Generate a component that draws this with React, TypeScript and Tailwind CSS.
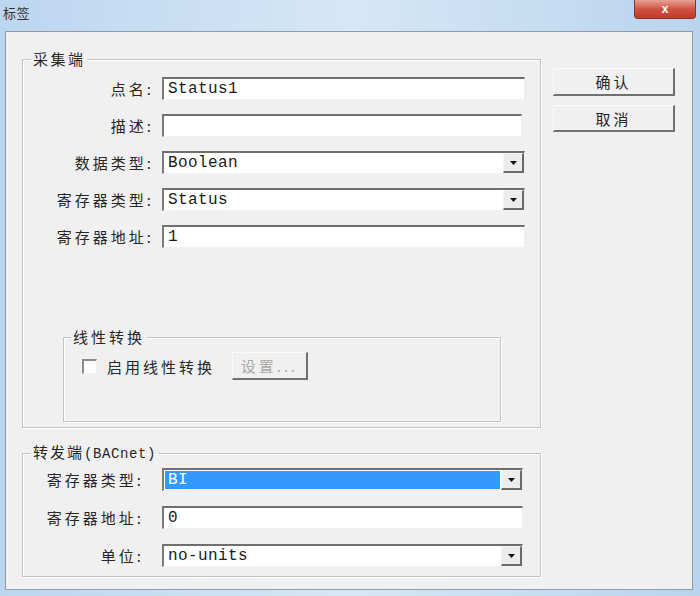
const cjk = "font-['Noto_Sans_CJK_SC','Noto_Sans',sans-serif]";
const mono = "font-['Liberation_Mono','DejaVu_Sans_Mono',monospace]";

function Arrow() {
  return (
    <div className="flex h-full w-[21px] shrink-0 items-center justify-center border-l border-t border-b-2 border-r-2 border-l-[#f4f4f4] border-t-[#f4f4f4] border-b-[#6a6a6a] border-r-[#6a6a6a] bg-[#ececec]">
      <svg width="7" height="4" viewBox="0 0 7 4">
        <path d="M0 0h7L3.5 4z" fill="#111" />
      </svg>
    </div>
  );
}

function Row({
  label,
  value = "",
  width,
  combo = false,
  hot = false,
  inset = false,
}: {
  label: string;
  value?: string;
  width: string;
  combo?: boolean;
  hot?: boolean;
  inset?: boolean;
}) {
  return (
    <div className="flex h-[23px] items-center">
      <div
        className={`w-[131px] text-right text-[15px] leading-none tracking-[3px] text-[#262626] ${cjk} ${
          inset ? "pr-[10px]" : ""
        }`}
      >
        {label}
      </div>
      <div
        className={`ml-[8px] flex h-full ${width} border-l-2 border-t-2 border-b border-r border-l-[#7a7a7a] border-t-[#6f6f6f] border-b-[#f2f2f2] border-r-[#ededed] bg-white`}
      >
        <div className="flex flex-1 items-center p-[1px]">
          <div
            className={`flex h-full flex-1 items-center pl-[3px] text-[16px] tracking-[0.4px] ${mono} ${
              hot ? "bg-[#3399ff] text-white" : "text-[#1a1a1a]"
            }`}
          >
            {value}
          </div>
        </div>
        {combo && <Arrow />}
      </div>
    </div>
  );
}

function Btn({ children, disabled = false, size }: { children: string; disabled?: boolean; size: string }) {
  return (
    <div
      className={`flex items-center justify-center ${size} border-l border-t border-b-2 border-r-2 border-l-[#fafafa] border-t-[#fafafa] border-b-[#707070] border-r-[#707070] bg-[#f0f0f0] text-[15px] leading-none tracking-[3px] ${cjk} ${
        disabled ? "text-[#a9a9a9]" : "text-[#262626]"
      }`}
    >
      {children}
    </div>
  );
}

export default function App() {
  return (
    <div className="flex h-[596px] w-[700px] flex-col bg-gradient-to-r from-[#bcd6ef] via-[#d6e7f7] to-[#b9d4ed]">
      {/* title bar */}
      <div className="flex h-[31px] shrink-0 items-start justify-between">
        <div className={`ml-[3px] mt-[6px] text-[13px] leading-none tracking-[0.5px] text-[#333] ${cjk}`}>标签</div>
        <div className="mr-[4px] flex h-[19px] w-[62px] items-center justify-center rounded-b-[4px] border border-t-0 border-[#8a3428] bg-gradient-to-b from-[#e7a295] via-[#cf5242] to-[#c23a29]">
          <span className="text-[12px] font-bold leading-none text-white [font-family:'Liberation_Sans',sans-serif]">x</span>
        </div>
      </div>

      {/* client area */}
      <div className="mb-[6px] ml-[5px] mr-[7px] flex flex-1 border border-[#8e9bab] bg-[#f0f0f0] pl-[16px] pt-[18px]">
        <div className="flex w-[519px] flex-col">
          <fieldset className="border border-[#c4c4c4] shadow-[inset_1px_1px_0_#fff,1px_1px_0_#fff]">
            <legend className={`ml-[8px] px-[2px] text-[15px] leading-[18px] tracking-[2.5px] text-[#262626] ${cjk}`}>
              采集端
            </legend>
            <div className="mt-[9px] flex flex-col gap-[14px]">
              <Row label="点名:" value="Status1" width="w-[363px]" />
              <Row label="描述:" width="w-[360px]" />
              <Row label="数据类型:" value="Boolean" width="w-[363px]" combo />
              <Row label="寄存器类型:" value="Status" width="w-[363px]" combo />
              <Row label="寄存器地址:" value="1" width="w-[363px]" />
            </div>

            <fieldset className="mb-[5px] ml-[40px] mt-[80px] w-[438px] border border-[#c4c4c4] shadow-[inset_1px_1px_0_#fff,1px_1px_0_#fff]">
              <legend className={`ml-[7px] px-[2px] text-[15px] leading-[18px] tracking-[3px] text-[#262626] ${cjk}`}>
                线性转换
              </legend>
              <div className="mb-[41px] ml-[18px] mt-[6px] flex h-[28px] items-center">
                <div className="h-[15px] w-[15px] border-l-2 border-t-2 border-b border-r border-l-[#8c8c8c] border-t-[#8c8c8c] border-b-[#f4f4f4] border-r-[#f4f4f4] bg-white" />
                <span className={`ml-[10px] text-[15px] leading-none tracking-[3px] text-[#262626] ${cjk}`}>启用线性转换</span>
                <div className="ml-[17px]">
                  <Btn disabled size="h-[28px] w-[76px]">
                    设置...
                  </Btn>
                </div>
              </div>
            </fieldset>
          </fieldset>

          <fieldset className="mt-[15px] border border-[#c4c4c4] shadow-[inset_1px_1px_0_#fff,1px_1px_0_#fff]">
            <legend className={`ml-[8px] px-[2px] text-[15px] leading-[18px] tracking-[2px] text-[#262626] ${cjk}`}>
              转发端<span className={`text-[14px] tracking-[0.6px] ${mono}`}>(BACnet)</span>
            </legend>
            <div className="mb-[9px] mt-[5px] flex flex-col gap-[15px]">
              <Row label="寄存器类型:" value="BI" width="w-[361px]" combo hot inset />
              <Row label="寄存器地址:" value="0" width="w-[361px]" inset />
              <Row label="单位:" value="no-units" width="w-[361px]" combo inset />
            </div>
          </fieldset>
        </div>

        <div className="ml-[12px] mt-[18px] flex flex-col gap-[9px]">
          <Btn size="h-[28px] w-[122px]">确认</Btn>
          <Btn size="h-[27px] w-[122px]">取消</Btn>
        </div>
      </div>
    </div>
  );
}
